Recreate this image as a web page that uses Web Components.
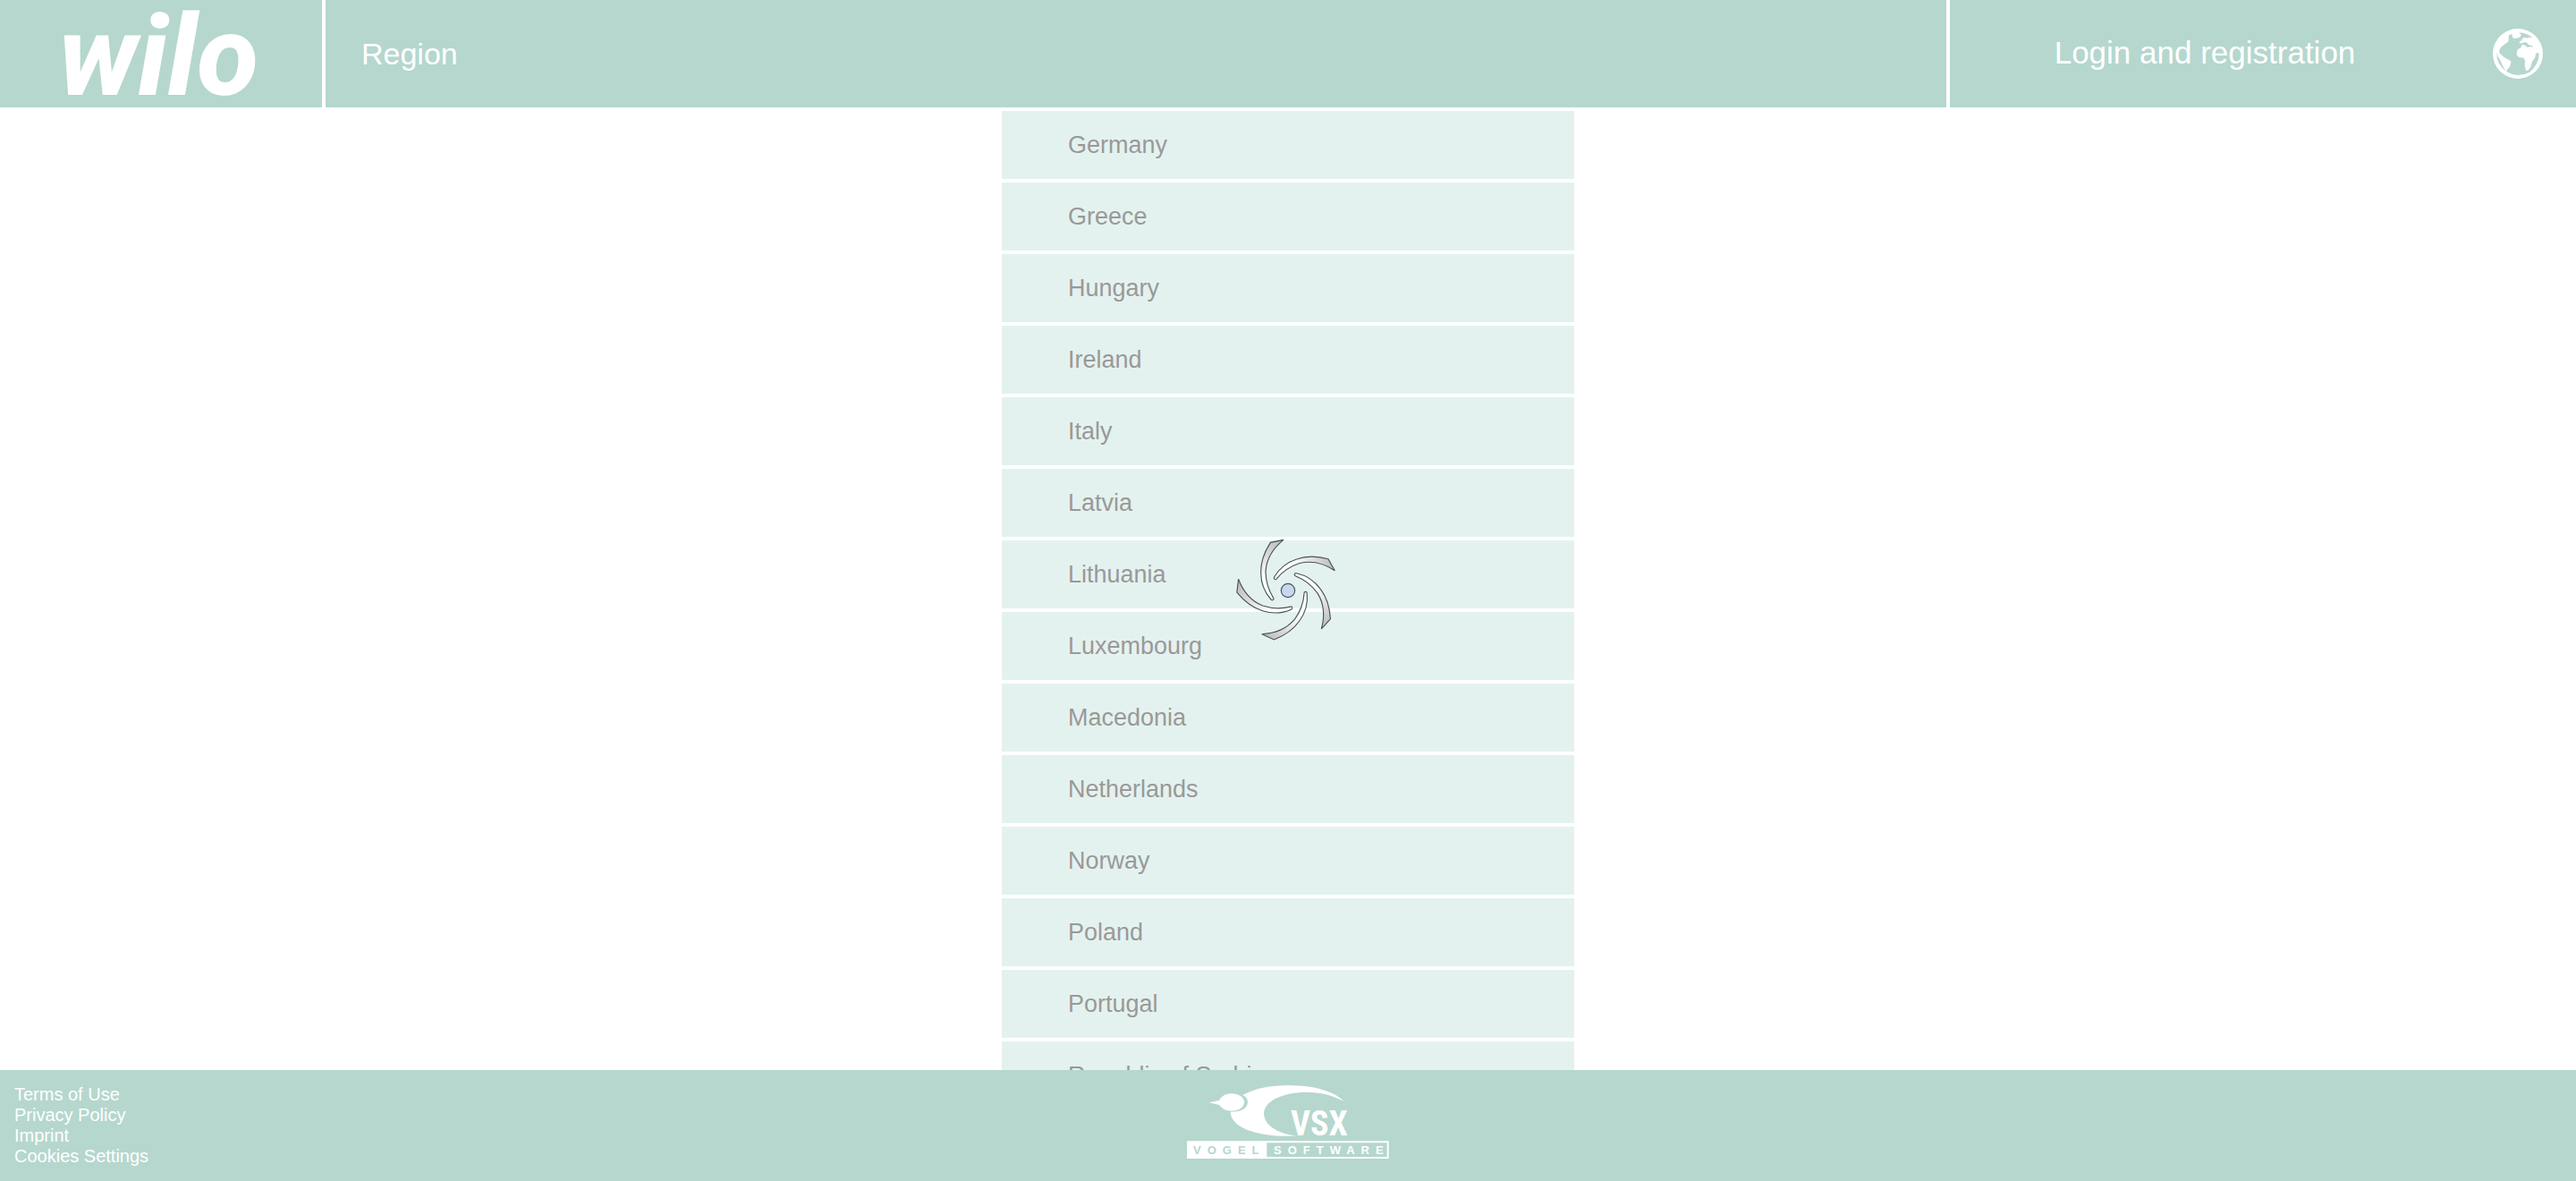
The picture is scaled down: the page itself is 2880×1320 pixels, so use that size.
<!DOCTYPE html>
<html lang="en">
<head>
<meta charset="utf-8">
<meta name="viewport" content="width=device-width, initial-scale=1">
<title>Wilo – Region</title>
<style>
  :root { --bar: #b5d7ce; --row: #e4f2ef; --muted: #999; }
  html, body { height: 100%; margin: 0; }
  body { background: #fff; font-family: "Liberation Sans", Arial, sans-serif; }
</style>
</head>
<body>
<region-page></region-page>
<script>
const define = (name, html, setup) => customElements.define(name, class extends HTMLElement {
  constructor() {
    super();
    const t = document.createElement('template');
    t.innerHTML = html;
    this.attachShadow({ mode: 'open' }).append(t.content.cloneNode(true));
    if (setup) setup(this.shadowRoot);
  }
});

define('wilo-logo', `
<style>
  :host { display: block; }
  a { display: block; }
  svg { display: block; width: 360px; height: 120px; overflow: visible; }
  text { font: italic 800 126px Roboto, "Liberation Sans", sans-serif; fill: #fff; }
</style>
<a href="#" aria-label="Wilo home"><svg viewBox="0 0 360 120"><text x="65" y="106">wilo</text></svg></a>`);

define('globe-icon', `
<style>
  :host { display: block; width: 56px; height: 56px; }
  svg { display: block; width: 100%; height: 100%; }
</style>
<svg viewBox="51 36 168 168" aria-hidden="true">
  <circle cx="135" cy="120" r="84" fill="#fff"/>
  <g fill="var(--bar)">
    <path d="M105 58 L116 54 L117 67 L128 69 L142 65 L146 58 L143 52 L138 49 L152 50 L166 55 L182 64 L180 67 L170 64 L172 69 L162 66 L156 66 L150 70 L148 76 L141 79 L140 85 L151 85 L158 81 L166 84 L172 91 L182 93 L186 98 L176 97 L165 98 L158 91 L148 91 L144 101 L135 105 L131 116 L132 126 L140 133 L155 134 L159 145 L158 160 L162 176 L169 176 L178 164 L183 147 L193 132 L195 120 L202 116 L206 122 L204 138 L197 155 L186 171 L174 182 L158 189 L135 192 L116 189 L97 180 L99 173 L108 164 L112 150 L111 144 L98 137 L89 132 L80 124 L73 118 L73 108 L80 97 L91 88 L103 80 L104 70 Z"/>
    <path d="M65 113 L68 130 L77 144 L82 157 L94 178 L81 166 L71 151 L65 134 Z"/>
  </g>
</svg>`);

define('pump-spinner', `
<style>
  :host { display: block; position: fixed; inset: 0; margin: auto; width: 120px; height: 120px; pointer-events: none; }
  svg { display: block; width: 100%; height: 100%; }
</style>
<svg viewBox="-180 -180 360 360" role="img" aria-label="Loading">
  <defs>
    <linearGradient id="g" gradientUnits="userSpaceOnUse" x1="-20" y1="-170" x2="-70" y2="-20">
      <stop offset="0" stop-color="#bbb"/><stop offset=".9" stop-color="#fff"/>
    </linearGradient>
    <path id="b" d="M-15 -170 L-59 -161 C-77 -133 -92 -102 -91 -60 C-91 -23 -76 9 -57 30 Q-53 34 -50 31 Q-46 28 -49 25 C-66 -2 -75 -32 -75 -65 C-72 -105 -55 -138 -15 -170 Z" fill="url(#g)" stroke="#48515a" stroke-width="3.4" stroke-linejoin="miter"/>
  </defs>
  <use href="#b"/><use href="#b" transform="rotate(72)"/><use href="#b" transform="rotate(144)"/>
  <use href="#b" transform="rotate(216)"/><use href="#b" transform="rotate(288)"/>
  <circle r="23" fill="#c7d7ed" stroke="#48515a" stroke-width="3.4"/>
</svg>`);

define('vsx-logo', `
<style>
  :host { display: block; }
  a { display: block; }
  svg { display: block; width: 226px; height: 82px; }
  .vsx { font: bold 38px "Liberation Sans Narrow", "Roboto Condensed", "Open Sans Condensed", Roboto, sans-serif; fill: #fff; }
  .tag { font: bold 13px "Liberation Sans", Arial, sans-serif; letter-spacing: 7px; }
</style>
<a href="#" aria-label="VSX Vogel Software"><svg viewBox="0 0 226 82">
  <g fill="#fff" transform="scale(.3333) translate(-82 -68)">
    <path d="M156 126 L190 119 C198 103 214 96 232 96 C257 96 274 109 274 125 C274 142 256 154 233 154 C214 154 199 147 191 134 Z"/>
    <path d="M269 101 C308 79 360 68 425 68 C510 69 577 88 610 123 C570 101 530 91 485 91 C402 91 342 121 340 162 C341 203 386 230 448 238 C315 243 229 209 228 157 C262 159 286 144 286 124 C286 113 280 106 269 101 Z"/>
    <path fill-rule="evenodd" d="M82 255 H759 V314 H82 Z M350 261 V308 H753 V261 Z"/>
  </g>
  <text class="vsx" x="116" y="56">VSX</text>
  <text class="tag" x="7" y="77" fill="var(--bar)">VOGEL</text>
  <text class="tag" x="97" y="77" fill="#fff">SOFTWARE</text>
</svg></a>`);

define('page-header', `
<style>
  :host { display: grid; grid-template-columns: 360px 1fr 700px; gap: 4px; height: 120px; background: #fff; color: #fff; flex: none; margin-bottom: 4px; }
  :host > * { background: var(--bar); }
  wilo-logo, h1, .account { background: var(--bar); }
  h1 { margin: 0; padding-left: 40px; display: flex; align-items: center; font-size: 34px; font-weight: normal; }
  .account { display: grid; grid-template-columns: 1fr 130px; }
  button { border: 0; padding: 0; background: none; color: inherit; font: 35px "Liberation Sans", Arial, sans-serif; cursor: pointer; display: flex; align-items: center; justify-content: center; }
  .login { padding-bottom: 2px; }
</style>
<wilo-logo></wilo-logo>
<h1><slot></slot></h1>
<div class="account">
  <button class="login" type="button">Login and registration</button>
  <button type="button" aria-label="Language"><globe-icon></globe-icon></button>
</div>`);

define('country-row', `
<style>
  :host { display: block; }
  button { display: block; width: 100%; height: 76px; border: 0; padding: 0 74px; text-align: left; background: var(--row); color: var(--muted); font: 27px "Liberation Sans", Arial, sans-serif; cursor: pointer; }
</style>
<button type="button"><slot></slot></button>`);

define('country-list', `
<style>
  :host { display: block; flex: 1; min-height: 0; overflow: hidden; }
  nav { width: 640px; max-width: 100%; margin: 0 auto; display: flex; flex-direction: column; gap: 4px; }
</style>
<nav aria-label="Countries"></nav>`, root => {
  const nav = root.querySelector('nav');
  for (const name of ['Germany', 'Greece', 'Hungary', 'Ireland', 'Italy', 'Latvia', 'Lithuania', 'Luxembourg', 'Macedonia', 'Netherlands', 'Norway', 'Poland', 'Portugal', 'Republic of Serbia']) {
    const row = document.createElement('country-row');
    row.textContent = name;
    nav.append(row);
  }
});

define('page-footer', `
<style>
  :host { display: grid; grid-template-columns: 1fr auto 1fr; height: 124px; background: var(--bar); flex: none; }
  nav { display: flex; flex-direction: column; align-items: flex-start; padding: 16px; }
  a { color: #fff; font-size: 20px; line-height: 23px; text-decoration: none; }
  vsx-logo { padding-top: 17px; }
</style>
<nav aria-label="Legal">
  <a href="#">Terms of Use</a><a href="#">Privacy Policy</a><a href="#">Imprint</a><a href="#">Cookies Settings</a>
</nav>
<vsx-logo></vsx-logo>`);

define('region-page', `
<style>:host { display: flex; flex-direction: column; height: 100vh; }</style>
<page-header>Region</page-header>
<country-list></country-list>
<page-footer></page-footer>
<pump-spinner></pump-spinner>`);
</script>
</body>
</html>
